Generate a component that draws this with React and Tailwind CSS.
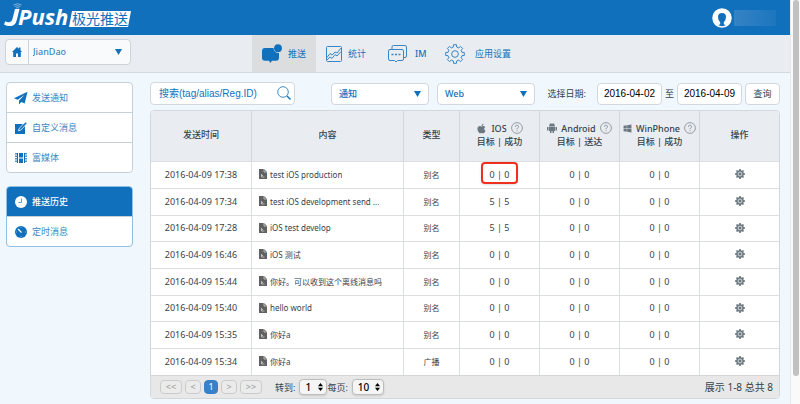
import React, { useState } from "react";
import { FaApple, FaWindows } from "react-icons/fa";

const rows = [
    { time: "2016-04-09 17:38", content: "test iOS production", type: "别名", ios: "0 | 0", marked: true },
    { time: "2016-04-09 17:34", content: "test iOS development send ...", type: "别名", ios: "5 | 5" },
    { time: "2016-04-09 17:28", content: "iOS test develop", type: "别名", ios: "5 | 5" },
    { time: "2016-04-09 16:46", content: "iOS 测试", type: "别名", ios: "0 | 0" },
    { time: "2016-04-09 15:44", content: "你好。可以收到这个离线消息吗", type: "别名", ios: "0 | 0" },
    { time: "2016-04-09 15:40", content: "hello world", type: "别名", ios: "0 | 0" },
    { time: "2016-04-09 15:35", content: "你好a", type: "别名", ios: "0 | 0" },
    { time: "2016-04-09 15:34", content: "你好a", type: "广播", ios: "0 | 0" },
];

// Outline of a cog with square teeth, built around (12, 12)
const cogPath = (teeth, outer, inner) => {
    const step = (Math.PI * 2) / teeth;
    const points = [];
    for (let i = 0; i < teeth; i++) {
        const mid = i * step - Math.PI / 2;
        [[-0.3, inner], [-0.2, outer], [0.2, outer], [0.3, inner]].forEach(([k, r]) => {
            points.push(`${(12 + r * Math.cos(mid + k * step)).toFixed(2)} ${(12 + r * Math.sin(mid + k * step)).toFixed(2)}`);
        });
    }
    return `M${points.join("L")}Z`;
};

const SmallCog = () => (
    <svg width="10" height="10" viewBox="0 0 24 24" className="text-[#6b7880]">
        <path d={cogPath(8, 12, 9.2)} fill="currentColor" />
        <circle cx="12" cy="12" r="4.6" fill="none" stroke="#e3e7e9" strokeWidth="2" />
    </svg>
);

const PushIcon = () => (
    <svg width="20" height="20" viewBox="0 0 20 20" fill="#1170bb">
        <path d="M3 4h8.500a4.800 4.800 0 0 0 5.500 4.800v5a3 3 0 0 1-3 3h-4l-1.700 2.200-1.300-2.200H3a3 3 0 0 1-3-3V7a3 3 0 0 1 3-3z" />
        <circle cx="16" cy="4.200" r="3.900" />
    </svg>
);

const StatsIcon = () => (
    <svg width="16" height="16" viewBox="0 0 16 16" fill="none" stroke="#3a86c4" strokeWidth="1">
        <rect x=".5" y=".5" width="15" height="15" rx="1" />
        <path d="M1 11.500l3-4 2 1.500 3-3 2 1 4-5M1 14l3-3 2 1.500 3-4 2 1.500 4-4.500" />
    </svg>
);

const ChatIcon = () => (
    <svg width="19" height="18" viewBox="0 0 19 18" fill="none" stroke="#3a86c4" strokeWidth="1">
        <path d="M4 4V2a1.500 1.500 0 0 1 1.500-1.500H17A1.500 1.500 0 0 1 18.500 2v9a1.500 1.500 0 0 1-1.500 1.500h-1.500" />
        <path d="M2 4.500h12a1.500 1.500 0 0 1 1.500 1.500v8a1.500 1.500 0 0 1-1.500 1.500H9.500L8 17l-1.500-1.500H2A1.500 1.500 0 0 1 .5 14V6A1.500 1.500 0 0 1 2 4.500z" />
        <path d="M3.500 9.500h2m1.500 0h2m1.500 0h2" strokeWidth="1.500" />
    </svg>
);

const SettingsIcon = () => (
    <svg width="20" height="20" viewBox="0 0 24 24" fill="none" stroke="#3a86c4" strokeWidth="1.200" strokeLinejoin="round">
        <path d={cogPath(8, 11.3, 8.6)} />
        <circle cx="12" cy="12" r="4" />
    </svg>
);

const PlaneIcon = () => (
    <svg width="14" height="14" viewBox="0 0 14 14" fill="#1170bb">
        <path d="M13.500.8L0 7.200l3.600 1.500L10.500 4 5 9.500v4l2.200-2.600 3.500 1.600z" />
    </svg>
);

const EditIcon = () => (
    <svg width="14" height="14" viewBox="0 0 14 14">
        <path d="M1 3h10v10H1z" fill="#1170bb" />
        <path d="M4.500 9.800l.7-2.500L11.500 1l1.500 1.500L6.900 9z" fill="#1170bb" stroke="#fff" strokeWidth=".8" />
    </svg>
);

const MediaIcon = () => (
    <svg width="14" height="14" viewBox="0 0 14 14" fill="#1170bb">
        <path d="M5 2h4v4.500H5zM5 7.500h4V12H5zM3 2h1v10H3zM10 2h1v10h-1z" />
        <path d="M2 2v10M12 2v10" stroke="#1170bb" strokeWidth="1.500" strokeDasharray="1.500 1" />
    </svg>
);

const ClockIcon = () => (
    <svg width="14" height="14" viewBox="0 0 14 14">
        <circle cx="7" cy="7" r="6" fill="#fff" />
        <path d="M7.500 3.500v4H4.500" fill="none" stroke="#5c9bd0" strokeWidth="1" />
    </svg>
);

const TimerIcon = () => (
    <svg width="14" height="14" viewBox="0 0 14 14">
        <circle cx="7" cy="7" r="6" fill="#1170bb" />
        <path d="M4 4L7.500 7.500" fill="none" stroke="#fff" strokeWidth="1.200" />
        <path d="M7 2v1M12 7h-1M7 12v-1M2 7h1" fill="none" stroke="#8dbbe0" strokeWidth=".8" />
    </svg>
);

const AndroidIcon = () => (
    <svg width="10" height="10" viewBox="0 0 20 20" fill="currentColor">
        <path d="M4 7a6 6 0 0 1 12 0zM4 8h12v8H4zM0 8h3v7H0zM17 8h3v7h-3zM6 15h3v5H6zM11 15h3v5h-3z" />
        <path d="M6 0l2 3M14 0l-2 3" stroke="currentColor" strokeWidth="1" />
    </svg>
);

const FileIcon = () => (
    <svg width="8" height="10" viewBox="0 0 8 10" className="shrink-0">
        <path d="M0 0h5l3 3v7H0z" fill="#616161" />
        <path d="M5 0v3h3M2.500 5v3h3M2.500 6.500h1.500" fill="none" stroke="#cfcfcf" strokeWidth=".8" />
    </svg>
);

const HelpIcon = () => (
    <svg width="12" height="12" viewBox="0 0 12 12" fill="none" stroke="#8b959b">
        <circle cx="6" cy="6" r="5.400" strokeWidth=".9" />
        <path d="M4.500 4.800A1.500 1.500 0 1 1 6.500 6.100Q6 6.400 6 7.200M6 8.200v1" />
    </svg>
);

const Logo = () => (
    <a href="#" aria-label="JPush" className="block">
        <svg width="134" height="35" viewBox="0 0 134 35">
            <path d="M13.500 5q4-2.500 8 0M14.800 6.500q2.700-1.600 5.400 0M16 8q1.500-.8 3 0" fill="none" stroke="#7fb3dc" strokeWidth="1" />
            <path d="M15 9h4.500l-2.700 11q-1.300 6-6.800 6-3.500 0-6-1.500l1.200-3.200q2 1.200 4.300 1 2.300-.2 3-3.300z" fill="#fff" />
            <text x="18" y="25" fill="#fff" fontSize="22" fontWeight="700" fontStyle="italic" fontFamily="Open Sans, sans-serif">Push</text>
            <path d="M72 11h59l-3 16H69z" fill="#fff" />
            <text x="72" y="24" fill="#1170bb" fontSize="14" fontFamily="Noto Sans CJK SC, sans-serif">极光推送</text>
        </svg>
    </a>
);

const Caret = () => (
    <svg width="7" height="6" viewBox="0 0 7 6" fill="#1170bb" className="pointer-events-none absolute right-2 top-1/2 -translate-y-1/2">
        <path d="M0 0h7L3.500 6z" />
    </svg>
);

const Filter = ({ label, options, className }) => (
    <div className={`relative w-[98px] ${className}`}>
        <select aria-label={label} className="block h-[22px] w-full appearance-none rounded-sm border border-[#d3d8dc] bg-white pl-[7px] text-[9px] font-medium leading-5 text-[#1170bb]">
            {options.map((option) => <option key={option}>{option}</option>)}
        </select>
        <Caret />
    </div>
);

const navItems = [
    { label: "推送", icon: <PushIcon />, className: "w-16 gap-[6px] bg-[#dcdddf]" },
    { label: "统计", icon: <StatsIcon />, className: "w-[62px] gap-[6px]" },
    { label: "IM", icon: <ChatIcon />, className: "w-[57px] gap-2 font-medium" },
    { label: "应用设置", icon: <SettingsIcon />, className: "w-24 gap-[10px]" },
];

const SideMenu = ({ items, className }) => (
    <nav className={`overflow-hidden rounded-sm border bg-white ${className}`}>
        {items.map((item, i) => (
            <a
                key={item.label}
                href="#"
                className={`flex items-center gap-1 pl-[7px] ${i > 0 ? "h-[30px] border-t border-[#c5d0d9]" : "h-[29px]"} ${item.active ? "bg-[#1170bb] font-medium text-white" : "text-[#3a86c4]"}`}
            >
                {item.icon}
                {item.label}
            </a>
        ))}
    </nav>
);

const PlatformHead = ({ icon, name, measure }) => (
    <th scope="col" className="border-l border-[#d3d7da] pb-[3px] font-medium">
        <div className="flex items-center justify-center gap-1">
            <span className="text-[#6b7880]">{icon}</span>
            {name}
            <HelpIcon />
        </div>
        <div>{measure}</div>
    </th>
);

const PageButton = ({ children, active, wide }) => (
    <button className={`h-[14px] rounded-sm border text-center leading-3 ${wide ? "w-[22px]" : active ? "w-[14px]" : "w-4"} ${active ? "border-[#3a80c9] bg-[#3a80c9] text-white" : "border-[#cbcbcb] bg-[#ebebeb] text-[#999]"}`}>
        {children}
    </button>
);

const PageSelect = ({ label, options, width }) => (
    <label className="flex items-center">
        {label}
        <span className={`relative ml-1 block ${width}`}>
            <select className="block h-4 w-full appearance-none rounded-sm border border-[#bcbcbc] bg-[#f5f5f5] pl-[5px] text-[10px] font-medium leading-[14px] text-black shadow-sm">
                {options.map((option) => <option key={option}>{option}</option>)}
            </select>
            <svg width="5" height="8" viewBox="0 0 5 8" className="pointer-events-none absolute right-1 top-1">
                <path d="M0 3.300L2.500 0 5 3.300zM0 4.700h5L2.500 8z" />
            </svg>
        </span>
    </label>
);

const App = () => {
    const [from, setFrom] = useState("2016-04-02");
    const [to, setTo] = useState("2016-04-09");

    return (
        <div className="flex min-h-screen bg-[#f0f8fe] font-['Noto_Sans','Noto_Sans_CJK_SC',sans-serif] text-[9px] leading-[13px] text-[#35424b]">
            <div className="min-w-0 flex-1">
                <header className="flex h-[35px] items-center justify-between bg-[#1170bb] pr-[14px]">
                    <Logo />
                    <div className="flex items-center gap-[2px]">
                        <svg width="20" height="20" viewBox="0 0 20 20">
                            <circle cx="10" cy="10" r="9" fill="#1170bb" stroke="#fff" strokeWidth="1.500" />
                            <path d="M1 10a9 9 0 0 1 18 0q0 5-4.500 7.500l-2.700-1.200v-2q2.200-2 2.200-5.300 0-4-4-4T6 9q0 3.300 2.200 5.300v2l-2.700 1.200Q1 15 1 10z" fill="#fff" />
                        </svg>
                        <div className="h-4 w-[42px] bg-gradient-to-r from-[#3483c4] to-[#1c76be]" />
                    </div>
                </header>

                <div className="flex h-[38px] border-b border-[#d2d8de] bg-[#e9ecf1] text-[#1170bb]">
                    <div className="flex w-[252px] items-center pb-[3px] pl-[5px]">
                        <div className="flex h-[26px] w-[126px] rounded-sm border border-[#ccd3d9] bg-[#f9fafb]">
                            <a href="#" aria-label="首页" className="flex w-[23px] items-center justify-center border-r border-[#ccd3d9]">
                                <svg width="10" height="10" viewBox="0 0 10 10" fill="#1170bb">
                                    <path d="M5 0l2 1.800V.5h1.500v2.700L10 5H8.800v5H6V6.500H4V10H1.200V5H0z" />
                                </svg>
                            </a>
                            <div className="relative flex-1">
                                <select aria-label="应用" className="block h-6 w-full appearance-none bg-transparent pl-1 font-medium leading-6 text-[#3a86c4]">
                                    <option>JianDao</option>
                                </select>
                                <Caret />
                            </div>
                        </div>
                    </div>
                    <nav className="flex">
                        {navItems.map((item) => (
                            <a key={item.label} href="#" className={`flex items-center pl-[10px] ${item.className}`}>
                                {item.icon}
                                {item.label}
                            </a>
                        ))}
                    </nav>
                </div>

                <div className="flex gap-[17px] pl-[6px] pr-[10px] pt-[9px]">
                    <aside className="w-[127px] shrink-0 space-y-[13px]">
                        <SideMenu
                            className="border-[#c5d0d9]"
                            items={[
                                { label: "发送通知", icon: <PlaneIcon /> },
                                { label: "自定义消息", icon: <EditIcon /> },
                                { label: "富媒体", icon: <MediaIcon /> },
                            ]}
                        />
                        <SideMenu
                            className="border-[#8fc0e6]"
                            items={[
                                { label: "推送历史", icon: <ClockIcon />, active: true },
                                { label: "定时消息", icon: <TimerIcon /> },
                            ]}
                        />
                    </aside>

                    <main className="min-w-0 flex-1">
                        <form className="mb-[5px] flex items-center" onSubmit={(e) => e.preventDefault()}>
                            <div className="relative mr-9 w-[145px]">
                                <input
                                    type="text"
                                    aria-label="搜索"
                                    placeholder="搜索(tag/alias/Reg.ID)"
                                    className="block h-[23px] w-full rounded-sm border border-[#d3d8dc] bg-white pl-2 font-['Liberation_Sans','Noto_Sans_CJK_SC',sans-serif] text-[10px] placeholder:text-[#1170bb] placeholder:opacity-100"
                                />
                                <svg width="14" height="14" viewBox="0 0 14 14" fill="none" stroke="#1170bb" className="absolute right-1 top-1">
                                    <circle cx="6" cy="6" r="5.300" strokeWidth=".8" />
                                    <path d="M10 10l3.500 3.500" strokeWidth="1.400" />
                                </svg>
                            </div>
                            <Filter label="消息类型" options={["通知"]} className="mr-2" />
                            <Filter label="来源" options={["Web"]} />
                            <div className="ml-auto flex items-center gap-[3px]">
                                <label htmlFor="from" className="mr-2">选择日期:</label>
                                <input id="from" value={from} onChange={(e) => setFrom(e.target.value)} className="h-[22px] w-[65px] rounded-sm border border-[#d3d8dc] bg-white text-center font-['Liberation_Sans',sans-serif] text-[10px] text-black" />
                                <label htmlFor="to">至</label>
                                <input id="to" value={to} onChange={(e) => setTo(e.target.value)} className="h-[22px] w-[65px] rounded-sm border border-[#d3d8dc] bg-white text-center font-['Liberation_Sans',sans-serif] text-[10px] text-black" />
                                <button className="h-[22px] w-[35px] rounded-sm border border-[#d3d8dc] bg-white">查询</button>
                            </div>
                        </form>

                        <div className="overflow-hidden rounded-sm border border-[#d3d7da] bg-white">
                            <table className="w-full table-fixed border-separate border-spacing-0 text-center">
                                <colgroup>
                                    <col className="w-[100px]" />
                                    <col />
                                    <col className="w-14" />
                                    <col className="w-20" />
                                    <col className="w-20" />
                                    <col className="w-20" />
                                    <col className="w-20" />
                                </colgroup>
                                <thead className="bg-[#e9edf2]">
                                    <tr className="h-[50px]">
                                        <th scope="col" className="pb-[3px] font-medium">发送时间</th>
                                        <th scope="col" className="border-l border-[#d3d7da] pb-[3px] font-medium">内容</th>
                                        <th scope="col" className="border-l border-[#d3d7da] pb-[3px] font-medium">类型</th>
                                        <PlatformHead icon={<FaApple size={11} />} name="IOS" measure="目标 | 成功" />
                                        <PlatformHead icon={<AndroidIcon />} name="Android" measure="目标 | 送达" />
                                        <PlatformHead icon={<FaWindows size={9} />} name="WinPhone" measure="目标 | 成功" />
                                        <th scope="col" className="border-l border-[#d3d7da] pb-[3px] font-medium">操作</th>
                                    </tr>
                                </thead>
                                <tbody>
                                    {rows.map((row) => (
                                        <tr key={row.time} className="h-[27px] nth-[3n]:h-[26px] *:border-t *:border-[#dcdfe1] *:pb-[2px]">
                                            <td>{row.time}</td>
                                            <td className="border-l">
                                                <div className="flex items-center gap-[3px] pl-[7px] text-[8px]">
                                                    <FileIcon />
                                                    <span className="truncate">{row.content}</span>
                                                </div>
                                            </td>
                                            <td className="border-l text-[8px]">{row.type}</td>
                                            <td className="relative border-l">
                                                {row.ios}
                                                {row.marked && <span className="absolute inset-x-[21px] top-0 h-[22px] rounded-[4px] border-2 border-[#f0301e] shadow" />}
                                            </td>
                                            <td className="border-l">0 | 0</td>
                                            <td className="border-l">0 | 0</td>
                                            <td className="border-l">
                                                <button aria-label="操作" className="mx-auto block"><SmallCog /></button>
                                            </td>
                                        </tr>
                                    ))}
                                </tbody>
                            </table>
                            <div className="flex h-[23px] items-center justify-between border-t border-[#d3d7da] bg-[#e8e8e8] pl-[9px] pr-[6px]">
                                <div className="flex items-center gap-[3px]">
                                    <PageButton wide>&lt;&lt;</PageButton>
                                    <PageButton>&lt;</PageButton>
                                    <PageButton active>1</PageButton>
                                    <PageButton>&gt;</PageButton>
                                    <PageButton wide>&gt;&gt;</PageButton>
                                    <div className="ml-[10px] flex items-center">
                                        <PageSelect label="转到:" options={["1"]} width="w-7" />
                                        <PageSelect label="每页:" options={["10"]} width="w-8" />
                                    </div>
                                </div>
                                <span className="text-[10px]">展示 1-8 总共 8</span>
                            </div>
                        </div>
                    </main>
                </div>
            </div>

            {/* scroll track */}
            <div className="w-[10px] border-l border-[#e4e8eb] bg-[#fafafa] pl-[2px]">
                <div className="h-[93vh] w-[6px] rounded-full bg-[#c1c1c1]" />
            </div>
        </div>
    );
};

export default App;
